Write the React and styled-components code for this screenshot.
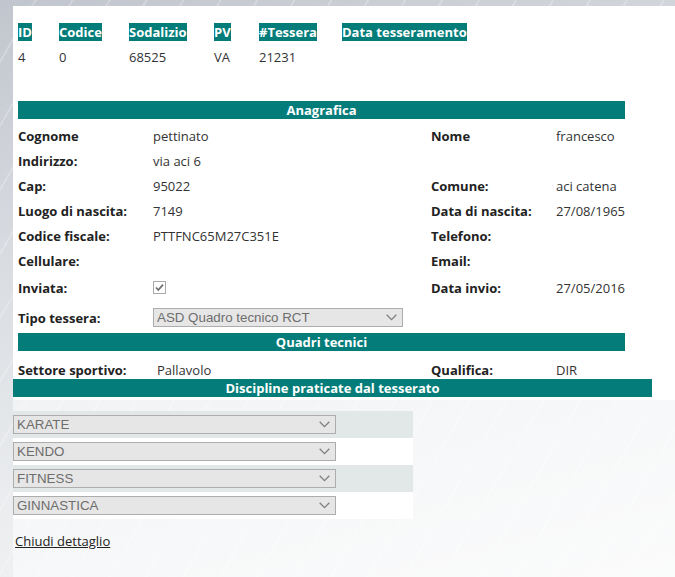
import React from 'react';
import styled, { createGlobalStyle } from 'styled-components';

const TEAL = '#047d7a';

const chevron =
  "url(\"data:image/svg+xml,%3Csvg xmlns='http://www.w3.org/2000/svg' width='11' height='7' viewBox='0 0 11 7'%3E%3Cpath d='M0.7 0.7 L5.5 5.6 L10.3 0.7' fill='none' stroke='%23808080' stroke-width='1.3'/%3E%3C/svg%3E\")";

const check =
  "url(\"data:image/svg+xml,%3Csvg xmlns='http://www.w3.org/2000/svg' width='11' height='11' viewBox='0 0 11 11'%3E%3Cpath d='M2 5.5 L4.3 8 L9 2.6' fill='none' stroke='%23707070' stroke-width='1.8'/%3E%3C/svg%3E\")";

const GlobalStyle = createGlobalStyle`
  html, body { margin: 0; padding: 0; }
  body {
    min-height: 577px;
    font-family: "Open Sans", "Noto Sans", sans-serif;
    font-size: 13px;
    color: #222;
    background-color: #eceef1;
    background-image:
      repeating-linear-gradient(120deg, rgba(255,255,255,0) 0 30px, rgba(255,255,255,0.22) 30px 32px),
      linear-gradient(165deg, #c1c5cd 0%, #d9dce1 35%, #eceef0 70%, #f5f6f7 100%);
  }
`;

const Page = styled.div`
  margin: 6px 0 0 13px;
  min-height: 571px;
  background: rgba(255, 255, 255, 0.5);
`;

const Panel = styled.div`
  background: #fff;
  padding: 17px 0 3px 0;
`;

const SummaryGrid = styled.div`
  margin-left: 5px;
  display: grid;
  grid-template-columns: 41px 70px 85px 45px 83px auto;
  row-gap: 7px;
  line-height: 18px;
`;

const HeadCell = styled.div`
  line-height: 18px;
`;

const HeadText = styled.span`
  background: ${TEAL};
  color: #fff;
  font-weight: 700;
`;

const SummaryValue = styled.div`
  color: #333;
  line-height: 18px;
`;

const Section = styled.div`
  margin: ${p => p.$mt || 0}px 0 0 5px;
  width: 607px;
`;

const Bar = styled.div`
  width: ${p => p.$w || 607}px;
  height: 18px;
  line-height: 18px;
  background: ${TEAL};
  color: #fff;
  font-weight: 700;
  text-align: center;
`;

const Row = styled.div`
  display: grid;
  grid-template-columns: ${p => p.$cols};
  align-items: ${p => (p.$pt ? 'start' : 'center')};
  height: ${p => p.$h}px;
  box-sizing: border-box;
  padding-top: ${p => p.$pt || 0}px;
  margin-top: ${p => p.$mt || 0}px;
  line-height: 18px;
`;

const Label = styled.div`
  font-weight: 700;
  color: #222;
  white-space: nowrap;
`;

const Value = styled.div`
  color: #333;
  white-space: nowrap;
  display: flex;
  align-items: center;
`;

const Select = styled.select`
  appearance: none;
  -webkit-appearance: none;
  box-sizing: border-box;
  width: ${p => p.$w}px;
  height: 19px;
  margin: 0;
  padding: 0 20px 0 3px;
  border: 1px solid #adadad;
  border-radius: 0;
  background: #e6e6e6 ${chevron} no-repeat right 5px center;
  font-family: "Liberation Sans", Arial, sans-serif;
  font-size: 13.333px;
  line-height: 17px;
  color: #6d6d6d;
  opacity: 1;
`;

const Check = styled.input`
  appearance: none;
  -webkit-appearance: none;
  box-sizing: border-box;
  width: 13px;
  height: 13px;
  margin: 0;
  border: 1px solid #aaaaaa;
  border-radius: 0;
  background: #fff ${check} no-repeat center;
`;

const Disciplines = styled.div`
  margin-top: 11px;
  width: 400px;
`;

const DiscRow = styled.div`
  height: 27px;
  box-sizing: border-box;
  padding-top: 4px;
  background: ${p => (p.$alt ? '#e2e7e8' : '#fff')};
`;

const CloseLink = styled.a`
  display: inline-block;
  margin: 13px 0 0 2px;
  line-height: 18px;
  color: #222;
  text-decoration: underline;
  cursor: pointer;
`;

const ANA_COLS = '135px 278px 125px 1fr';
const QT_COLS = '139px 274px 125px 1fr';

const summary = [
  ['ID', '4'],
  ['Codice', '0'],
  ['Sodalizio', '68525'],
  ['PV', 'VA'],
  ['#Tessera', '21231'],
  ['Data tesseramento', ''],
];

const anagrafica = [
  ['Cognome', 'pettinato', 'Nome', 'francesco'],
  ['Indirizzo:', 'via aci 6', '', ''],
  ['Cap:', '95022', 'Comune:', 'aci catena'],
  ['Luogo di nascita:', '7149', 'Data di nascita:', '27/08/1965'],
  ['Codice fiscale:', 'PTTFNC65M27C351E', 'Telefono:', ''],
  ['Cellulare:', '', 'Email:', ''],
];

const discipline = ['KARATE', 'KENDO', 'FITNESS', 'GINNASTICA'];

export default function App() {
  return (
    <>
      <GlobalStyle />
      <Page>
        <Panel>
          <SummaryGrid>
            {summary.map(([h]) => (
              <HeadCell key={h}>
                <HeadText>{h}</HeadText>
              </HeadCell>
            ))}
            {summary.map(([h, v]) => (
              <SummaryValue key={h + 'v'}>{v}</SummaryValue>
            ))}
          </SummaryGrid>

          <Section $mt={35}>
            <Bar>Anagrafica</Bar>
            {anagrafica.map(([l1, v1, l2, v2], i) => (
              <Row key={l1} $cols={ANA_COLS} $h={25} $mt={i === 0 ? 4 : 0}>
                <Label>{l1}</Label>
                <Value>{v1}</Value>
                <Label>{l2}</Label>
                <Value>{v2}</Value>
              </Row>
            ))}
            <Row $cols={ANA_COLS} $h={29}>
              <Label>Inviata:</Label>
              <Value>
                <Check type="checkbox" checked disabled readOnly />
              </Value>
              <Label>Data invio:</Label>
              <Value>27/05/2016</Value>
            </Row>
            <Row $cols={ANA_COLS} $h={31}>
              <Label>Tipo tessera:</Label>
              <Value>
                <Select $w={250} disabled defaultValue="rct">
                  <option value="rct">ASD Quadro tecnico RCT</option>
                </Select>
              </Value>
              <div />
              <div />
            </Row>
            <Bar>Quadri tecnici</Bar>
            <Row $cols={QT_COLS} $h={28} $pt={10}>
              <Label>Settore sportivo:</Label>
              <Value>Pallavolo</Value>
              <Label>Qualifica:</Label>
              <Value>DIR</Value>
            </Row>
          </Section>
          <Bar $w={639}>Discipline praticate dal tesserato</Bar>
        </Panel>

        <Disciplines>
          {discipline.map((d, i) => (
            <DiscRow key={d} $alt={i % 2 === 0}>
              <Select $w={323} disabled defaultValue={d}>
                <option value={d}>{d}</option>
              </Select>
            </DiscRow>
          ))}
        </Disciplines>
        <CloseLink href="#">Chiudi dettaglio</CloseLink>
      </Page>
    </>
  );
}
